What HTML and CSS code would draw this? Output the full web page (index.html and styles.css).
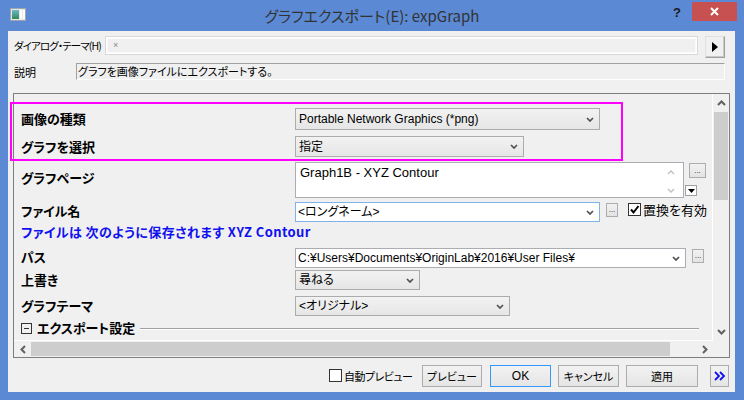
FILE: index.html
```html
<!DOCTYPE html>
<html lang="ja">
<head>
<meta charset="utf-8">
<title>グラフエクスポート</title>
<link rel="stylesheet" href="styles.css">
</head>
<body>
<div class="window">
  <div class="titlebar">
    <div class="tb-left">
      <svg class="app-icon" width="16" height="13" viewBox="0 0 16 13">
        <defs>
          <linearGradient id="g1" x1="0" y1="0" x2="0" y2="1">
            <stop offset="0" stop-color="#6fb8c8"/>
            <stop offset="1" stop-color="#2f8a5a"/>
          </linearGradient>
        </defs>
        <rect x="0.5" y="0.5" width="15" height="12" fill="#e6e6e6" stroke="#9aa6b0"/>
        <rect x="2" y="2" width="7" height="9" fill="url(#g1)"/>
        <rect x="10" y="2" width="2" height="9" fill="#ffffff"/>
        <rect x="13" y="2" width="2" height="9" fill="#ffffff"/>
      </svg>
    </div>
    <div class="title">グラフエクスポート(E): expGraph</div>
    <div class="tb-right">
      <div class="help">?</div>
      <div class="close">
        <svg width="9" height="9" viewBox="0 0 9 9"><path d="M1 1L8 8M8 1L1 8" stroke="#fff" stroke-width="2"/></svg>
      </div>
    </div>
  </div>

  <div class="client">
    <div class="theme-row">
      <span class="top-label theme-label">ダイアログ・テーマ(H)</span>
      <div class="theme-input"><span class="tiny-x">×</span></div>
      <div class="arrow-btn">
        <svg width="6" height="10" viewBox="0 0 6 10"><path d="M0 0L6 5L0 10Z" fill="#000"/></svg>
      </div>
    </div>
    <div class="desc-row">
      <span class="top-label desc-label">説明</span>
      <div class="desc-box">グラフを画像ファイルにエクスポートする。</div>
    </div>

    <div class="panel">
      <div class="content">
        <div class="row r1">
          <div class="lbl">画像の種類</div>
          <div class="combo w305"><span class="ctext">Portable Network Graphics (*png)</span>
            <svg class="chev" width="8" height="5" viewBox="0 0 8 5"><path d="M1 1L4 4L7 1" fill="none" stroke="#505050" stroke-width="1.7"/></svg></div>
        </div>
        <div class="row r2">
          <div class="lbl">グラフを選択</div>
          <div class="combo w229"><span class="ctext">指定</span>
            <svg class="chev" width="8" height="5" viewBox="0 0 8 5"><path d="M1 1L4 4L7 1" fill="none" stroke="#505050" stroke-width="1.7"/></svg></div>
        </div>
        <div class="row r3">
          <div class="lbl top">グラフページ</div>
          <div class="textarea">
            <span class="ttext">Graph1B - XYZ Contour</span>
            <div class="tscroll">
              <svg width="8" height="5" viewBox="0 0 8 5"><path d="M1 4L4 1L7 4" fill="none" stroke="#c4c4c4" stroke-width="1.5"/></svg>
              <svg width="8" height="5" viewBox="0 0 8 5"><path d="M1 1L4 4L7 1" fill="none" stroke="#c4c4c4" stroke-width="1.5"/></svg>
            </div>
          </div>
          <div class="side">
            <div class="dots big">...</div>
            <div class="mini-drop">
              <svg width="7" height="4" viewBox="0 0 7 4"><path d="M0 0H7L3.5 4Z" fill="#000"/></svg>
            </div>
          </div>
        </div>
        <div class="row r4">
          <div class="lbl">ファイル名</div>
          <div class="combo edit focus w305"><span class="ctext">&lt;ロングネーム&gt;</span>
            <svg class="chev" width="8" height="5" viewBox="0 0 8 5"><path d="M1 1L4 4L7 1" fill="none" stroke="#505050" stroke-width="1.7"/></svg></div>
          <div class="dots small">...</div>
          <div class="check checked">
            <svg width="11" height="11" viewBox="0 0 11 11"><path d="M2 5.5L4.5 8.5L9.5 2" fill="none" stroke="#000" stroke-width="2"/></svg>
          </div>
          <span class="check-label">置換を有効</span>
        </div>
        <div class="note">ファイルは 次のように保存されます XYZ Contour</div>
        <div class="row r5">
          <div class="lbl">パス</div>
          <div class="combo edit w391"><span class="ctext">C:¥Users¥Documents¥OriginLab¥2016¥User Files¥</span>
            <svg class="chev" width="8" height="5" viewBox="0 0 8 5"><path d="M1 1L4 4L7 1" fill="none" stroke="#505050" stroke-width="1.7"/></svg></div>
          <div class="dots small">...</div>
        </div>
        <div class="row r6">
          <div class="lbl">上書き</div>
          <div class="combo w125"><span class="ctext">尋ねる</span>
            <svg class="chev" width="8" height="5" viewBox="0 0 8 5"><path d="M1 1L4 4L7 1" fill="none" stroke="#505050" stroke-width="1.7"/></svg></div>
        </div>
        <div class="row r7">
          <div class="lbl">グラフテーマ</div>
          <div class="combo w215"><span class="ctext">&lt;オリジナル&gt;</span>
            <svg class="chev" width="8" height="5" viewBox="0 0 8 5"><path d="M1 1L4 4L7 1" fill="none" stroke="#505050" stroke-width="1.7"/></svg></div>
        </div>
        <div class="section">
          <span class="collapse">
            <svg width="11" height="11" viewBox="0 0 11 11"><rect x="0.5" y="0.5" width="10" height="10" fill="none" stroke="#333"/><path d="M3 5.5H8" stroke="#333"/></svg>
          </span>
          <span class="section-title">エクスポート設定</span>
          <span class="section-line"></span>
        </div>
        <div class="row r8">
          <div class="lbl"></div>
          <div class="combo w167"></div>
        </div>
      </div>
      <div class="vscroll">
        <div class="sb-arrow up">
          <svg width="9" height="6" viewBox="0 0 9 6"><path d="M1 5L4.5 1.5L8 5" fill="none" stroke="#606060" stroke-width="2"/></svg>
        </div>
        <div class="vthumb"></div>
        <div class="sb-fill"></div>
        <div class="sb-arrow down">
          <svg width="9" height="6" viewBox="0 0 9 6"><path d="M1 1L4.5 4.5L8 1" fill="none" stroke="#606060" stroke-width="2"/></svg>
        </div>
      </div>
      <div class="hscroll">
        <div class="sb-arrow left">
          <svg width="6" height="9" viewBox="0 0 6 9"><path d="M5 1L1.5 4.5L5 8" fill="none" stroke="#606060" stroke-width="2"/></svg>
        </div>
        <div class="hthumb"></div>
        <div class="sb-fill"></div>
        <div class="sb-arrow right">
          <svg width="6" height="9" viewBox="0 0 6 9"><path d="M1 1L4.5 4.5L1 8" fill="none" stroke="#606060" stroke-width="2"/></svg>
        </div>
      </div>
      <div class="corner"></div>
      <div class="highlight"></div>
    </div>

    <div class="footer">
      <div class="check"></div>
      <span class="auto-label">自動プレビュー</span>
      <div class="btn b-preview">プレビュー</div>
      <div class="btn b-ok">OK</div>
      <div class="btn b-cancel">キャンセル</div>
      <div class="btn b-apply">適用</div>
      <div class="btn b-more">
        <svg width="12" height="10" viewBox="0 0 12 10"><path d="M1 1L5 5L1 9M6 1L10 5L6 9" fill="none" stroke="#1010f0" stroke-width="1.8"/></svg>
      </div>
    </div>
  </div>
</div>
</body>
</html>
```

FILE: styles.css
```css
* { box-sizing: border-box; }
html, body { margin: 0; padding: 0; }
body {
  width: 744px;
  height: 400px;
  overflow: hidden;
  background: #5b89d4;
  font-family: "Noto Sans CJK JP", sans-serif;
  font-feature-settings: "palt";
  color: #000;
}
.window {
  width: 744px;
  height: 400px;
  display: flex;
  flex-direction: column;
  background: #5b89d4;
}

/* title bar */
.titlebar {
  height: 31px;
  display: grid;
  grid-template-columns: 1fr auto 1fr;
}
.tb-left { padding: 8px 0 0 10px; }
.app-icon { display: block; }
.title {
  font-size: 15px;
  line-height: 32px;
  color: #333;
  white-space: nowrap;
}
.tb-right {
  display: flex;
  justify-content: flex-end;
  align-items: flex-start;
  padding-right: 7px;
}
.help {
  font: bold 13px/13px "Liberation Sans", sans-serif;
  color: #1a1a1a;
  margin-top: 6px;
  margin-right: 11px;
}
.close {
  width: 45px;
  height: 19px;
  margin-top: 2px;
  background: #c75050;
  display: flex;
  align-items: center;
  justify-content: center;
}

/* client */
.client {
  flex: 1;
  margin: 0 9px 8px 8px;
  background: #f0f0f0;
  display: flex;
  flex-direction: column;
}
.top-label {
  font-size: 11px;
  line-height: 14px;
  white-space: nowrap;
}
.theme-row {
  display: flex;
  align-items: flex-start;
  padding: 5px 0 0 6px;
}
.theme-label {
  width: 91px;
  flex-shrink: 0;
  margin-top: 3px;
  font-size: 10.5px;
  letter-spacing: -0.9px;
}
.theme-input {
  width: 593px;
  height: 19px;
  flex-shrink: 0;
  border: 1px solid #d9d9d9;
  box-shadow: inset 0 0 0 1px #fff, inset 0 0 0 2px #fafafa;
  background: #f0f0f0;
  padding-left: 7px;
  font: 9px/17px "Liberation Sans", sans-serif;
  color: #888;
}
.arrow-btn {
  width: 20px;
  height: 22px;
  flex-shrink: 0;
  margin-left: 7px;
  border: 1px solid #a0a0a0;
  border-top-color: #e0e0e0;
  border-left-color: #e0e0e0;
  box-shadow: inset -1px -1px 0 #c8c8c8;
  background: #f0f0f0;
  display: flex;
  align-items: center;
  justify-content: center;
}
.desc-row {
  display: flex;
  align-items: center;
  padding-left: 6px;
  margin-top: 5px;
}
.desc-label { width: 62px; }
.desc-box {
  width: 649px;
  height: 17px;
  border: 1px solid #fff;
  border-top-color: #a0a0a0;
  border-left-color: #a0a0a0;
  background: #f0f0f0;
  font-size: 11px;
  line-height: 15px;
  padding-left: 1px;
  white-space: nowrap;
}

/* main panel */
.panel {
  position: relative;
  margin: 13px 0 0 5px;
  width: 717px;
  height: 265px;
  border: 1px solid #7d7d7d;
  display: grid;
  grid-template-columns: 699px 16px;
  grid-template-rows: 247px 16px;
}
.content {
  overflow: hidden;
  border-right: 1px solid #fff;
  border-bottom: 1px solid #fff;
  display: flex;
  flex-direction: column;
}
.row {
  display: flex;
  align-items: center;
  flex-shrink: 0;
}
.lbl {
  width: 281px;
  flex-shrink: 0;
  padding-left: 7px;
  font-size: 13px;
  font-weight: bold;
  line-height: 16px;
  white-space: nowrap;
}
.lbl.top { align-self: flex-start; margin-top: 8px; }
.r1 { margin-top: 14px; height: 22px; }
.r2 { margin-top: 6px; height: 21px; }
.r3 { margin-top: 5px; height: 36px; }
.r4 { margin-top: 4px; height: 20px; }
.r5 { margin-top: 9px; height: 20px; }
.r6 { margin-top: 2px; height: 20px; }
.r7 { margin-top: 6px; height: 20px; }
.r8 { margin-top: 5px; height: 20px; }
.r4 .lbl, .r5 .lbl { margin-top: -3px; }

.combo {
  height: 100%;
  flex-shrink: 0;
  display: flex;
  align-items: center;
  border: 1px solid #acacac;
  background: linear-gradient(#f2f2f2, #e6e6e6);
  padding: 0 5px 0 3px;
  font-family: "Liberation Sans", "Noto Sans CJK JP", sans-serif;
  font-size: 12px;
  line-height: 14px;
  white-space: nowrap;
}
.combo.edit {
  background: #fff;
  border-color: #abadb3;
  padding-left: 2px;
}
.combo.focus { border-color: #7eb4ea; }
.ctext { flex: 1; overflow: hidden; }
.chev { flex-shrink: 0; }
.w305 { width: 305px; }
.w229 { width: 229px; }
.w391 { width: 391px; }
.w125 { width: 125px; }
.w215 { width: 215px; }
.w167 { width: 167px; }

.textarea {
  width: 389px;
  height: 100%;
  flex-shrink: 0;
  background: #fff;
  border: 1px solid #abadb3;
  display: flex;
  padding: 2px 8px 0 4px;
}
.ttext {
  flex: 1;
  font: 13px/16px "Liberation Sans", sans-serif;
}
.tscroll {
  display: flex;
  flex-direction: column;
  justify-content: space-between;
  padding: 5px 0 4px;
}
.tscroll svg { display: block; }
.side {
  height: 100%;
  display: flex;
  flex-direction: column;
  align-items: flex-start;
  justify-content: space-between;
}
.dots {
  border: 1px solid #acacac;
  background: linear-gradient(#f2f2f2, #e3e3e3);
  display: flex;
  align-items: flex-end;
  justify-content: center;
  font: 8px/8px "Liberation Sans", sans-serif;
  color: #222;
  padding-bottom: 2px;
  flex-shrink: 0;
}
.dots.big { width: 17px; height: 15px; margin: 1px 0 0 5px; }
.dots.small { width: 12px; height: 14px; margin-left: 6px; align-self: flex-start; margin-top: 1px; }
.mini-drop {
  width: 12px;
  height: 11px;
  margin: 0 0 2px 1px;
  border: 1px solid #a0a0a0;
  background: #fff;
  display: flex;
  align-items: center;
  justify-content: center;
}
.check {
  width: 13px;
  height: 13px;
  border: 1px solid #333;
  background: #fff;
  flex-shrink: 0;
  display: flex;
  align-items: center;
  justify-content: center;
}
.r4 .check { margin-left: 10px; align-self: flex-start; margin-top: 1px; }
.check-label {
  margin-left: 2px;
  font-size: 13px;
  line-height: 16px;
  white-space: nowrap;
  align-self: flex-start;
}
.note {
  margin-top: 3px;
  height: 14px;
  padding-left: 7px;
  font-size: 13px;
  line-height: 14px;
  font-weight: bold;
  letter-spacing: 0.4px;
  color: #1010f0;
  white-space: nowrap;
  flex-shrink: 0;
}
.section {
  margin-top: 5px;
  height: 14px;
  display: flex;
  align-items: center;
  padding-left: 7px;
  flex-shrink: 0;
}
.collapse { display: flex; margin-right: 5px; }
.section-title {
  font-size: 13px;
  font-weight: bold;
  line-height: 14px;
  white-space: nowrap;
}
.section-line {
  flex: 1;
  height: 2px;
  border-top: 1px solid #a0a0a0;
  border-bottom: 1px solid #fff;
  margin: 1px 13px 0 5px;
}

/* scrollbars */
.vscroll, .hscroll, .corner { background: #f0f0f0; }
.vscroll { display: flex; flex-direction: column; align-items: center; }
.hscroll { display: flex; align-items: center; }
.sb-arrow { display: flex; align-items: center; justify-content: center; flex-shrink: 0; }
.sb-arrow.up { height: 18px; width: 16px; }
.sb-arrow.down { height: 18px; width: 16px; }
.sb-arrow.left { width: 17px; height: 16px; }
.sb-arrow.right { width: 16px; height: 16px; }
.sb-fill { flex: 1; }
.vthumb { width: 14px; height: 88px; background: #cdcdcd; }
.hthumb { width: 639px; height: 14px; background: #cdcdcd; }

/* overlay highlight */
.highlight {
  position: absolute;
  left: -4px;
  top: 8px;
  width: 613px;
  height: 59px;
  border: 2px solid #ff00ff;
  pointer-events: none;
}

/* footer */
.footer {
  flex: 1;
  display: flex;
  align-items: flex-start;
  justify-content: flex-end;
  padding: 7px 6px 0 0;
}
.footer > .check { margin-top: 4px; }
.auto-label {
  width: 58px;
  margin: 3px 20px 0 2px;
  font-size: 11px;
  line-height: 16px;
  letter-spacing: -0.5px;
  white-space: nowrap;
}
.btn {
  height: 22px;
  border: 1px solid #acacac;
  background: linear-gradient(#f2f2f2, #e5e5e5);
  display: flex;
  align-items: center;
  justify-content: center;
  font-size: 11px;
  line-height: 14px;
  white-space: nowrap;
  flex-shrink: 0;
}
.b-preview { width: 60px; }
.b-ok { width: 61px; margin-left: 8px; border-color: #3399ff; font-family: "Liberation Sans", sans-serif; font-size: 12px; }
.b-cancel { width: 61px; margin-left: 7px; }
.b-apply { width: 72px; margin-left: 7px; }
.b-more { width: 19px; margin-left: 12px; }
```
